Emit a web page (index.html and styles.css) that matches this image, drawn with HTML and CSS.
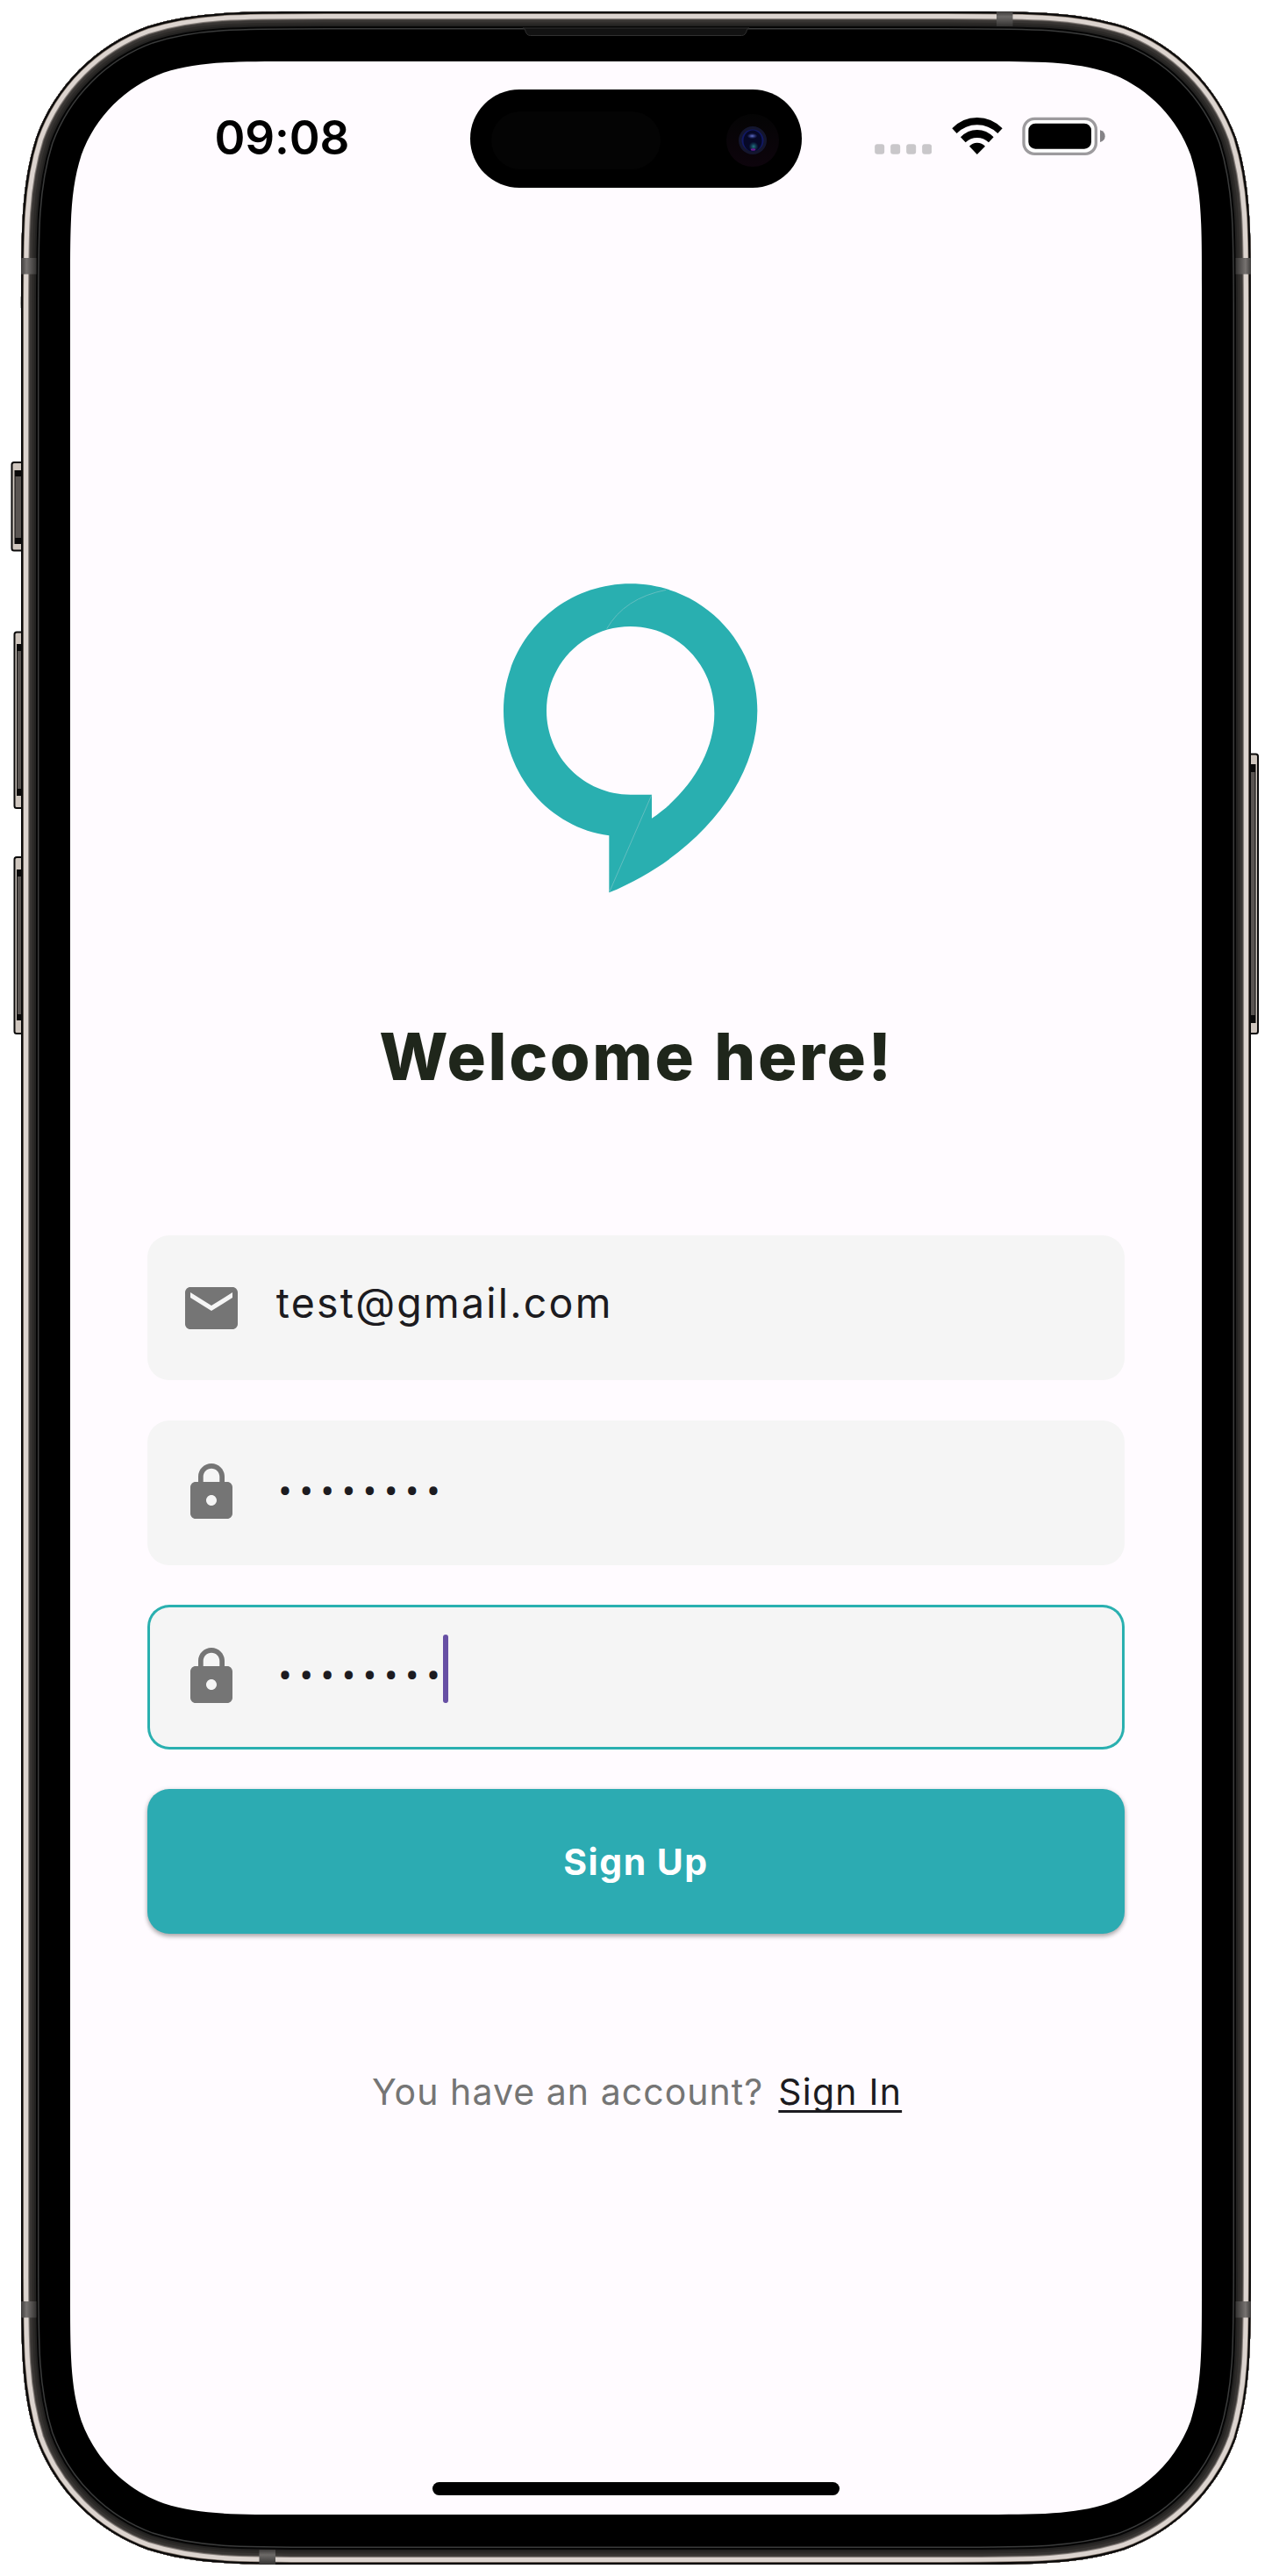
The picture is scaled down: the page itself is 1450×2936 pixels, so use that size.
FILE: index.html
```html
<!DOCTYPE html>
<html lang="en">
<head>
<meta charset="utf-8">
<title>Sign Up</title>
<link rel="stylesheet" href="styles.css">
</head>
<body>
<div class="device">
  <svg class="frame" viewBox="0 0 1450 2936" aria-hidden="true">
    <defs>
      <path id="body" d="M24 361.5c0-100.3 0-150.5 17.1-204.5c21.4-59 67.9-105.5 126.9-126.9c54-17.1 104.2-17.1 204.5-17.1h705c100.3 0 150.5 0 204.5 17.1c59 21.4 105.5 67.9 126.9 126.9c17.1 54 17.1 104.2 17.1 204.5v2213c0 100.3 0 150.5-17.1 204.5c-21.4 59-67.9 105.5-126.9 126.9c-54 17.1-104.2 17.1-204.5 17.1h-705c-100.3 0-150.5 0-204.5-17.1c-59-21.4-105.5-67.9-126.9-126.9c-17.1-54-17.1-104.2-17.1-204.5z"/>
      <clipPath id="bodyClip"><use href="#body"/></clipPath>
      <linearGradient id="band" x1="0" x2="1"><stop offset="0" stop-color="#3c3a39"/><stop offset=".35" stop-color="#777371"/><stop offset="1" stop-color="#333231"/></linearGradient>
      <linearGradient id="bandR" x1="1" x2="0"><stop offset="0" stop-color="#3c3a39"/><stop offset=".35" stop-color="#777371"/><stop offset="1" stop-color="#333231"/></linearGradient>
      <linearGradient id="bandV" x1="0" x2="0" y1="0" y2="1"><stop offset="0" stop-color="#3c3a39"/><stop offset=".35" stop-color="#6d6a68"/><stop offset="1" stop-color="#333231"/></linearGradient>
    </defs>

    <g class="side-key">
      <rect x="13.5" y="527" width="18" height="100.500" rx="2.500"/>
      <rect x="16.500" y="720.500" width="16" height="200.500" rx="2.500"/>
      <rect x="16.500" y="977" width="16" height="201" rx="2.500"/>
      <rect x="1418" y="859.5" width="16" height="318.500" rx="2.500"/>
    </g>
    <g class="side-key-core">
      <rect x="16.5" y="536" width="12" height="84"/>
      <rect x="19" y="734" width="12" height="173"/>
      <rect x="19" y="991" width="12" height="172"/>
      <rect x="1419.500" y="871" width="12" height="295"/>
    </g>
    <g class="side-key-face">
      <rect x="17.5" y="543" width="8" height="70"/>
      <rect x="20" y="742" width="5" height="157"/>
      <rect x="20" y="999" width="5" height="157"/>
      <rect x="1426" y="880" width="4.500" height="277"/>
    </g>

    <use href="#body" fill="#000"/>
    <g clip-path="url(#bodyClip)" fill="none">
      <use href="#body" stroke="#3a3b3b" stroke-width="41"/>
      <use href="#body" stroke="#050505" stroke-width="38"/>
      <use href="#body" stroke="#232221" stroke-width="34"/>
      <use href="#body" stroke="#2c2a28" stroke-width="30"/>
      <use href="#body" stroke="#383533" stroke-width="25"/>
      <use href="#body" stroke="#4b4744" stroke-width="20"/>
      <use href="#body" stroke="#8a837f" stroke-width="18"/>
      <use href="#body" stroke="#dcd4cf" stroke-width="16"/>
      <use href="#body" stroke="#85796f" stroke-width="6"/>
      <use href="#body" stroke="#0c0b0b" stroke-width="4.500"/>
    </g>
    <rect x="24" y="294" width="17.500" height="18.500" fill="url(#band)"/>
    <rect x="24" y="2623" width="17.500" height="18.500" fill="url(#band)"/>
    <rect x="1408.500" y="294" width="17.500" height="18.500" fill="url(#bandR)"/>
    <rect x="1408.500" y="2623" width="17.500" height="18.500" fill="url(#bandR)"/>
    <rect x="1136" y="13" width="18.500" height="17" fill="url(#bandV)"/>
    <rect x="295.500" y="2906" width="18.500" height="17" fill="url(#bandV)"/>
    <path d="M596 32h258q-2 0-2.500 2q-1.500 6.500-6 6.500h-241q-4.500 0-6-6.500q-.5-2-2.500-2z" fill="#121212" stroke="#303030" stroke-width="1"/>
    <path fill="#fffbff" d="M80 328.300c0-74.300 0-111.500 12.700-151.600c15.900-43.700 50.300-78.100 94-94c40.100-12.700 77.300-12.700 151.600-12.700h773.400c74.300 0 111.500 0 151.600 12.700c43.700 15.900 78.100 50.300 94 94c12.700 40.100 12.700 77.300 12.700 151.600v2279.400c0 74.300 0 111.500-12.700 151.600c-15.900 43.700-50.300 78.100-94 94c-40.100 12.700-77.300 12.700-151.600 12.700h-773.400c-74.300 0-111.500 0-151.600-12.700c-43.700-15.900-78.100-50.300-94-94c-12.700-40.100-12.700-77.300-12.700-151.600z"/>
  </svg>

  <div class="screen">
    <header class="status">
      <div class="time">09:08</div>
      <div class="island">
        <span class="sensor"></span>
        <svg class="camera" viewBox="0 0 60 60">
          <defs>
            <linearGradient id="ring" x1="0" x2="0" y1="0" y2="1"><stop offset="0" stop-color="#040404"/><stop offset="1" stop-color="#0d040c"/></linearGradient>
            <radialGradient id="glow"><stop offset="0" stop-color="#6474cf"/><stop offset="1" stop-color="#3a48a0" stop-opacity="0"/></radialGradient>
            <radialGradient id="teal"><stop offset="0" stop-color="#237a84"/><stop offset="1" stop-color="#14506a" stop-opacity="0"/></radialGradient>
          </defs>
          <circle cx="30" cy="30" r="30" fill="url(#ring)"/>
          <circle cx="30" cy="30" r="16" fill="#14162e"/>
          <circle cx="30" cy="30" r="12.500" fill="#111965"/>
          <ellipse cx="30" cy="30.500" rx="10.500" ry="12" fill="#060827"/>
          <ellipse cx="29.500" cy="25" rx="6" ry="3.200" fill="url(#glow)"/>
          <circle cx="31" cy="37" r="5.500" fill="url(#teal)"/>
          <ellipse cx="30.500" cy="40.500" rx="2.800" ry="1.200" fill="#6c1a92"/>
        </svg>
      </div>
      <div class="indicators">
        <svg width="65.500" height="44" viewBox="140.500 397 196.500 132" fill="#c9c7ca">
          <rect x="141" y="491" width="33" height="34" rx="9"/><rect x="195" y="491" width="33" height="34" rx="9"/><rect x="249" y="491" width="33" height="34" rx="9"/><rect x="303" y="491" width="33" height="34" rx="9"/>
        </svg>
        <svg width="58" height="44" viewBox="404 397 174 132">
          <path d="M405 437Q440 400 490.500 400Q541 400 577 437L561 454Q530 425 490.500 425Q451 425 421 454ZM434 467Q458 442 490.500 442Q523 442 547 467L530 485Q513 469 490.500 469Q468 469 451 485ZM464 498Q475 486 490.500 486Q507 486 518 498L490.500 526Z"/>
        </svg>
        <svg width="95" height="44" viewBox="645 397 285 132">
          <rect x="651" y="404" width="247" height="120" rx="37" fill="#fff" stroke="#9d9b9e" stroke-width="10"/>
          <rect x="667" y="420" width="215" height="87" rx="24"/>
          <path fill="#858387" d="M912 443q17 5 17 20.500t-17 20.500z"/>
        </svg>
      </div>
    </header>

    <main class="content">
      <svg class="logo" viewBox="15 0 1080 1200" role="img" aria-label="Logo">
        <path fill="#29afb0" fill-rule="evenodd" d="M536 76C776 76 970 270 970 510C970 760 760 1010 463 1132V937C260 910 102 730 102 510C102 270 296 76 536 76ZM536 222C377 222 249 351 249 510C249 668 377 797 536 797H609V878C740 790 823 650 823 520C823 351 695 222 536 222Z"/>
        <path fill="none" stroke="#62bec0" stroke-width="3" d="M455 230Q515 125 658 97M608 799L464 1130"/>
      </svg>
      <h1 class="title">Welcome here!</h1>
      <form class="form">
        <label class="field">
          <svg class="icon" viewBox="0 0 24 24"><path d="M20 4H4c-1.100 0-1.990.9-1.990 2L2 18c0 1.100.9 2 2 2h16c1.100 0 2-.9 2-2V6c0-1.100-.9-2-2-2zm0 4l-8 5-8-5V6l8 5 8-5v2z"/></svg>
          <span class="value">test@gmail.com</span>
        </label>
        <label class="field">
          <svg class="icon" viewBox="0 0 24 24"><path d="M18 8h-1V6c0-2.760-2.240-5-5-5S7 3.240 7 6v2H6c-1.100 0-2 .9-2 2v10c0 1.100.9 2 2 2h12c1.100 0 2-.9 2-2V10c0-1.100-.9-2-2-2zm-6 9c-1.100 0-2-.9-2-2s.9-2 2-2 2 .9 2 2-.9 2-2 2zm3.100-9H8.900V6c0-1.710 1.390-3.100 3.100-3.100 1.710 0 3.100 1.390 3.100 3.100v2z"/></svg>
          <span class="value secret">••••••••</span>
        </label>
        <label class="field focused">
          <svg class="icon" viewBox="0 0 24 24"><path d="M18 8h-1V6c0-2.760-2.240-5-5-5S7 3.240 7 6v2H6c-1.100 0-2 .9-2 2v10c0 1.100.9 2 2 2h12c1.100 0 2-.9 2-2V10c0-1.100-.9-2-2-2zm-6 9c-1.100 0-2-.9-2-2s.9-2 2-2 2 .9 2 2-.9 2-2 2zm3.100-9H8.900V6c0-1.710 1.390-3.100 3.100-3.100 1.710 0 3.100 1.390 3.100 3.100v2z"/></svg>
          <span class="value secret">••••••••</span>
          <span class="caret"></span>
        </label>
        <button class="submit" type="button">Sign Up</button>
      </form>
      <p class="switch"><span>You have an account?</span><a class="link">Sign In</a></p>
    </main>
    <div class="home-bar"></div>
  </div>
</div>
</body>
</html>
```

FILE: styles.css
```css
* { box-sizing: border-box; }

body {
  margin: 0;
  background: #fff;
  font-family: Inter, "Liberation Sans", sans-serif;
}

.device {
  position: relative;
  width: 1450px;
  height: 2936px;
  padding: 70px 80px;
}

.frame {
  position: absolute;
  inset: 0;
  width: 1450px;
  height: 2936px;
}

.side-key rect { fill: #cfc6be; stroke: #0b0a0a; stroke-width: 2; }
.side-key-core rect { fill: #0a0909; }
.side-key-face rect { fill: #5a5552; }

.screen {
  position: relative;
  display: flex;
  flex-direction: column;
  width: 1290px;
  height: 2796px;
}

.status {
  display: grid;
  grid-template-columns: 1fr 378px 1fr;
  align-items: center;
  height: 143.5px;
  padding-top: 32px;
}

.time {
  padding: 0 0 2px 164.5px;
  font-size: 53px;
  font-weight: 600;
  line-height: 60px;
  letter-spacing: -0.2px;
  color: #000;
}

.island {
  display: flex;
  align-items: center;
  justify-content: space-between;
  height: 112px;
  padding: 3px 26px 0 24px;
  border-radius: 56px;
  background: #000;
}

.sensor {
  width: 193px;
  height: 66px;
  border-radius: 33px;
  background: #040404;
}

.camera { width: 60px; height: 60px; }

.indicators {
  display: flex;
  gap: 22.5px;
  padding: 0 0 6.5px 82.5px;
}

.content {
  display: flex;
  flex: 1;
  flex-direction: column;
  align-items: center;
  padding: 426.5px 88.3px 0;
}

.logo { width: 360px; height: 400px; }

.title {
  margin: 118.5px 0 0 1px;
  font-size: 74px;
  font-weight: 800;
  line-height: 90px;
  letter-spacing: 2.6px;
  word-spacing: 2px;
  color: #1f261b;
}

.form {
  display: flex;
  flex-direction: column;
  gap: 45.33px;
  width: 100%;
  margin-top: 159.8px;
}

.field {
  display: flex;
  align-items: center;
  height: 165px;
  padding-left: 36.5px;
  border-radius: 25px;
  background: #f5f5f5;
}

.focused { box-shadow: inset 0 0 0 3px #2ab0b0; }

.icon { width: 72px; height: 72px; fill: #757575; }

.value {
  margin-left: 38px;
  padding-bottom: 12px;
  font-size: 46.5px;
  letter-spacing: 2.2px;
  color: #1c1b20;
}

.secret {
  margin-left: 40.5px;
  padding-bottom: 2px;
  font-family: Roboto, sans-serif;
  font-size: 46px;
  letter-spacing: 8.6px;
}

.caret {
  width: 6px;
  height: 78px;
  margin: 0 0 18px -5px;
  border-radius: 3px;
  background: #6750a4;
}

.submit {
  height: 165px;
  padding: 0;
  border: 0;
  border-radius: 25px;
  background: #2cabb2;
  box-shadow: 0 3px 5px rgba(0, 0, 0, .28), 0 1px 6px rgba(0, 0, 0, .12);
  font-family: inherit;
  font-size: 41px;
  font-weight: 700;
  letter-spacing: 1.5px;
  color: #fff;
}

.switch {
  display: flex;
  gap: 17px;
  margin: 155px 0 0 2px;
  font-size: 41px;
  line-height: 50px;
  letter-spacing: 1.05px;
  color: #757575;
}

.link {
  color: #1c1b20;
  letter-spacing: 1.2px;
  text-decoration: underline;
  text-decoration-thickness: 3px;
  text-decoration-skip-ink: none;
  text-underline-offset: 6px;
}

.home-bar {
  align-self: center;
  width: 464px;
  height: 15px;
  margin-bottom: 22px;
  border-radius: 8px;
  background: #000;
}
```
